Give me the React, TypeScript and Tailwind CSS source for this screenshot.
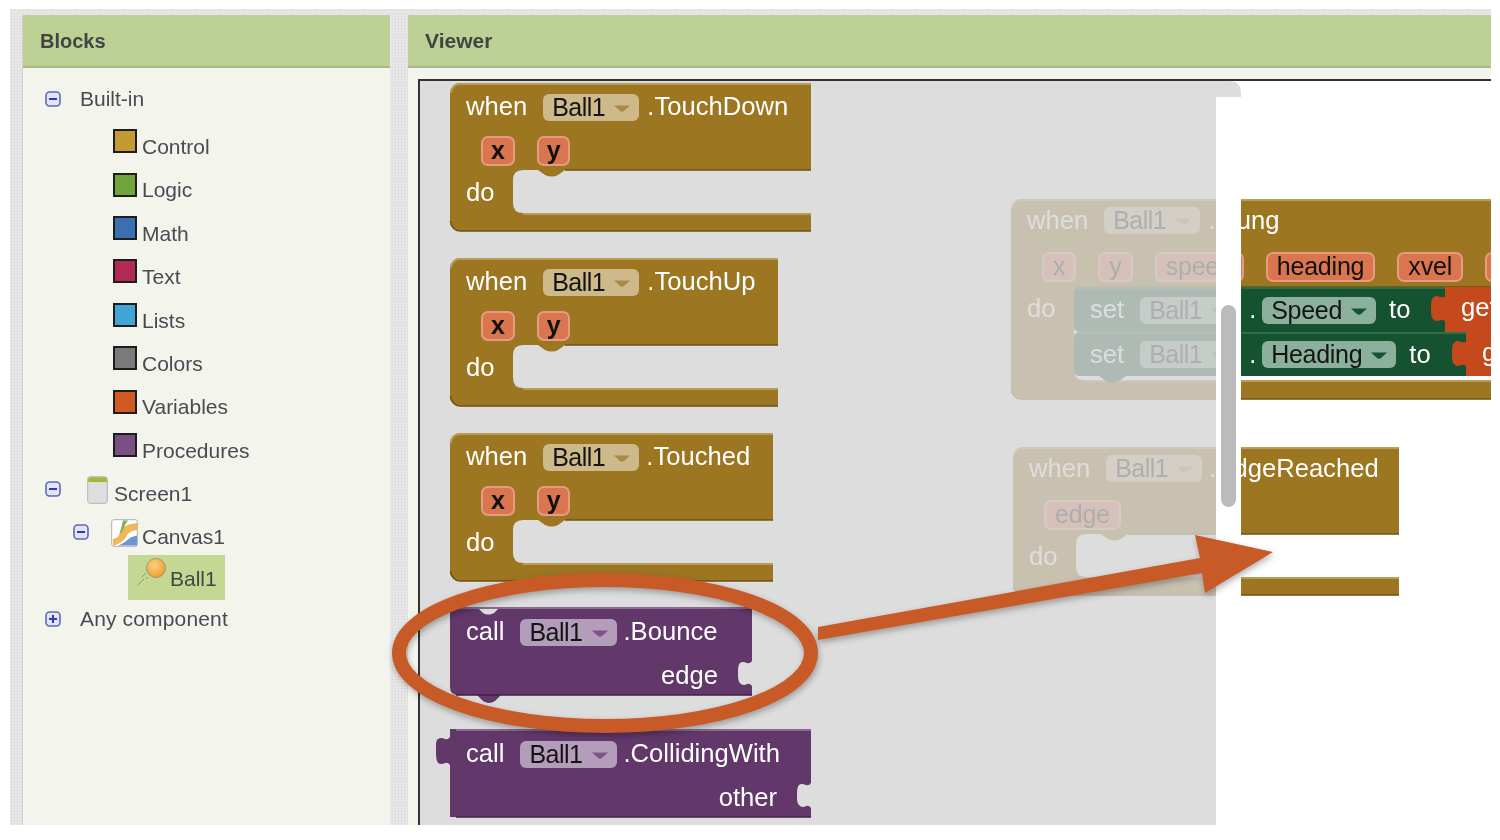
import type { ReactNode } from 'react';

const BROWN = '#9c7621';
const PURPLE = '#62386b';

const categories = [
  { name: 'Control', color: 'bg-[#c49a35]' },
  { name: 'Logic', color: 'bg-[#6fa53a]' },
  { name: 'Math', color: 'bg-[#3a6fb0]' },
  { name: 'Text', color: 'bg-[#b02a55]' },
  { name: 'Lists', color: 'bg-[#3fa6d6]' },
  { name: 'Colors', color: 'bg-[#7a7a7a]' },
  { name: 'Variables', color: 'bg-[#d05a22]' },
  { name: 'Procedures', color: 'bg-[#7a4f85]' },
];

const Toggle = ({ plus = false }: { plus?: boolean }) => (
  <svg width="16" height="16" viewBox="0 0 16 16" className="shrink-0">
    <rect x="1" y="1" width="14" height="14" rx="3.5" fill="#e2e5f4" stroke="#5f68b8" strokeWidth="1.6" />
    <path d={plus ? 'M4 8h8M8 4v8' : 'M4 8h8'} stroke="#2f36c8" strokeWidth="2" />
  </svg>
);

const ScreenIcon = () => (
  <svg width="21" height="28" viewBox="0 0 21 28" className="shrink-0">
    <rect x="0.7" y="0.7" width="19.6" height="26.6" rx="2.5" fill="#dedede" stroke="#b5b5b5" />
    <path d="M1.2 6V3.2a2 2 0 0 1 2-2h14.6a2 2 0 0 1 2 2V6z" fill="#9dbd3a" />
  </svg>
);

const CanvasIcon = () => (
  <svg width="27" height="28" viewBox="0 0 27 28" className="shrink-0">
    <rect x="0.7" y="0.7" width="25.6" height="26.6" rx="2" fill="#fff" stroke="#b0b0b0" />
    <path d="M2 27V20C7 19 9 16 11 11 13 7 17 5 26 4V11C20 12 17 14 15 18 13 22 8 25 2 27z" fill="#f2b65a" />
    <path d="M8 16C10 11 11 5 12 1.500H17C14 5 13 9 11 13z" fill="#7fb24a" />
    <path d="M7 26.500C12 25 16 21 19 19 21 17.500 24 17 26 16.500V26.500z" fill="#6e95cf" />
  </svg>
);

const BallIcon = () => (
  <svg width="30" height="30" viewBox="0 0 30 30" className="shrink-0">
    <defs>
      <radialGradient id="ball" cx="0.4" cy="0.35" r="0.7">
        <stop offset="0" stopColor="#fbd27c" />
        <stop offset="1" stopColor="#ee9a2c" />
      </radialGradient>
    </defs>
    <circle cx="19" cy="10" r="9.500" fill="url(#ball)" stroke="#8f8f7a" strokeWidth="0.8" />
    <path d="M5 19l4-4M1 27l6-6M9 21l2-2" stroke="#8e9480" strokeWidth="1" />
  </svg>
);

const TreeRow = ({ pl, className = 'h-[43.4px]', children }: { pl: string; className?: string; children: ReactNode }) => (
  <div className={`flex items-center ${pl} ${className}`}>{children}</div>
);

const Sidebar = () => (
  <aside className="flex w-[368px] shrink-0 flex-col border-l border-[#cfcfcf] bg-[#f3f4ec]">
    <div className="flex h-[53px] shrink-0 items-center border-b-2 border-[#a7b78f] bg-[#bcd193] pl-[17px] text-[20px] font-bold text-[#444]">
      Blocks
    </div>
    <div className="flex flex-col pt-[11px] text-[21px] text-[#4a4a52]">
      <TreeRow pl="pl-[22px]" className="mb-[6px] h-[40px]">
        <Toggle />
        <span className="ml-[19px]">Built-in</span>
      </TreeRow>
      {categories.map((c) => (
        <TreeRow key={c.name} pl="pl-[90px]">
          <span className={`mb-[11px] size-[24px] shrink-0 border-2 border-[#1d1d1d] ${c.color}`} />
          <span className="ml-[5px]">{c.name}</span>
        </TreeRow>
      ))}
      <TreeRow pl="pl-[22px]" className="h-[43px]">
        <span className="mb-[10px] flex"><Toggle /></span>
        <span className="mb-[8px] ml-[26px] flex"><ScreenIcon /></span>
        <span className="ml-[6px]">Screen1</span>
      </TreeRow>
      <TreeRow pl="pl-[50px]" className="h-[43px]">
        <span className="mb-[10px] flex"><Toggle /></span>
        <span className="mb-[8px] ml-[22px] flex"><CanvasIcon /></span>
        <span className="ml-[4px]">Canvas1</span>
      </TreeRow>
      <div className="-mt-[3.500px] ml-[105px] flex h-[45px] w-[97px] items-center bg-[#c5d893] pl-[9px] text-[#454545]">
        <span className="mb-[9px] flex"><BallIcon /></span>
        <span className="ml-[3px] mt-[3px]">Ball1</span>
      </div>
      <TreeRow pl="pl-[22px]" className="h-[38px]">
        <Toggle plus />
        <span className="ml-[19px] tracking-[0.15px]">Any component</span>
      </TreeRow>
    </div>
  </aside>
);

const BlockText = ({ children, className = '' }: { children: ReactNode; className?: string }) => (
  <span className={`whitespace-nowrap text-[25.6px] leading-none text-white ${className}`}>{children}</span>
);

const Pill = ({ label, bg, arrow, className = '' }: { label: string; bg: string; arrow: string; className?: string }) => (
  <span className={`flex h-[27px] shrink-0 items-center gap-[8px] rounded-[6px] pl-[9px] pr-[8px] text-[25px] leading-none text-[#141414] ${bg} ${className}`}>
    {label}
    <svg width="18" height="8" viewBox="0 0 18 8" className="mt-[3px]">
      <path d="M1 0.500h16L11 6q-2 1.500-4 0z" fill={arrow} />
    </svg>
  </span>
);

const BrownPill = () => <Pill label="Ball1" bg="bg-[#cdb98a]" arrow="#a98a44" className="tracking-[-0.5px]" />;
const PurplePill = () => <Pill label="Ball1" bg="bg-[#b49cbb]" arrow="#7b5585" className="tracking-[-0.5px]" />;

const Chip = ({ label, bold = false }: { label: string; bold?: boolean }) => (
  <span className={`flex h-[30px] shrink-0 items-center rounded-[7px] border-2 border-[#e59c80] bg-[#d9754f] text-[25px] leading-none tracking-[-0.2px] text-[#111] ${bold ? 'px-[8px] font-bold' : 'px-[9px]'}`}>
    {label}
  </span>
);

type EventProps = {
  x: number;
  y: number;
  w: number;
  h?: number;
  notchTop?: number;
  notchBottom?: number;
  children: ReactNode;
};

const eventPath = (w: number, h: number, t: number, b: number) =>
  `M0 10A10 10 0 0 1 10 0H${w}V${t}H115L108 ${t + 5}Q102 ${t + 8} 95 ${t + 5}L88 ${t}H73Q63 ${t} 63 ${t + 10}V${b - 10}Q63 ${b} 73 ${b}H${w}V${h}H10A10 10 0 0 1 0 ${h - 10}Z`;

// hat block with a statement hole; x, y are canvas coordinates of the picture
const EventBlock = ({ x, y, w, h = 148, notchTop = 87, notchBottom = 130, children }: EventProps) => (
  <div className="absolute" style={{ left: x - 420, top: y - 81, width: w, height: h }}>
    <svg width={w} height={h + 2} className="absolute left-0 top-0 overflow-visible">
      <path d={eventPath(w, h, notchTop, notchBottom)} fill={BROWN} />
      <path d={`M1 10A9 9 0 0 1 10 1H${w}`} fill="none" stroke="#b99c55" strokeWidth="2" />
      <path d={`M73 ${notchBottom + 1}H${w}`} fill="none" stroke="#b99c55" strokeWidth="2" />
      <path d={`M0.500 ${h - 10}A10 10 0 0 0 10 ${h}H${w}M${w} ${notchTop}H115`} fill="none" stroke="#6d5215" strokeWidth="1.500" />
    </svg>
    <div className="relative flex flex-col">{children}</div>
  </div>
);

const HatRow = ({ children }: { children: ReactNode }) => (
  <div className="flex h-[48px] items-center pl-[16px]">{children}</div>
);

const Params = ({ names, bold = false }: { names: string[]; bold?: boolean }) => (
  <div className="flex h-[39px] items-center gap-[22px] pl-[31px]">
    {names.map((n) => <Chip key={n} label={n} bold={bold} />)}
  </div>
);

const TouchBlock = ({ y, w, name, gap }: { y: number; w: number; name: string; gap: string }) => (
  <EventBlock x={450} y={y} w={w}>
    <HatRow>
      <BlockText className="mr-[16px]">when</BlockText>
      <BrownPill />
      <BlockText className={gap}>{name}</BlockText>
    </HatRow>
    <Params names={['x', 'y']} bold />
    <div className="flex h-[46px] items-center pl-[16px]"><BlockText>do</BlockText></div>
  </EventBlock>
);

const socket = (w: number, y: number) =>
  `V${y}Q${w - 2} ${y + 3} ${w - 5} ${y + 2}Q${w - 10} ${y} ${w - 12} ${y + 2}Q${w - 14} ${y + 4} ${w - 14} ${y + 10}V${y + 15}Q${w - 14} ${y + 21} ${w - 11} ${y + 23}Q${w - 8} ${y + 25} ${w - 5} ${y + 23}Q${w - 2} ${y + 22} ${w} ${y + 25}`;

const CallBlock = ({ x, y, w, h, path, method, arg }: { x: number; y: number; w: number; h: number; path: string; method: string; arg: string }) => (
  <div className="absolute" style={{ left: x - 420, top: y - 81, width: w, height: h }}>
    <svg width={w} height={h} className="absolute left-0 top-0 overflow-visible">
      <path d={path} fill={PURPLE} />
      <path d={`M6 1H${w}`} stroke="#8a6a92" strokeWidth="2" fill="none" />
      <path d={`M6 ${h}H${w}`} stroke="#3f2046" strokeWidth="1.500" fill="none" />
    </svg>
    <div className="relative flex flex-col">
      <div className="flex h-[50px] items-center pl-[16px]">
        <BlockText className="mr-[16px]">call</BlockText>
        <PurplePill />
        <BlockText className="ml-[7px]">{method}</BlockText>
      </div>
      <div className="flex h-[37px] items-center justify-end pr-[34px]"><BlockText>{arg}</BlockText></div>
    </div>
  </div>
);

const Plug = ({ fill }: { fill: string }) => (
  <svg width="15" height="28" viewBox="0 0 15 28" className="absolute -left-[14px] top-[8px]">
    <path d="M15 1Q12 3 9 2 5 0 3 2 0 4 0 10V16Q0 23 3 25 6 27 9 25 12 24 15 27z" fill={fill} />
  </svg>
);

const SetRow = ({ prop, green, last = false, children }: { prop: string; green: string; last?: boolean; children: string }) => (
  <div className="relative flex h-[44.500px]">
    <div className={`flex h-full items-center rounded-l-[5px] border-t-2 border-[#2f6d4a] bg-[#15522f] pl-[16px] ${green}`}>
      <BlockText className="mr-[16px]">set</BlockText>
      <Pill label="Ball1" bg="bg-[#8bb09c]" arrow="#3d7a58" className="tracking-[-0.5px]" />
      <BlockText className="ml-[13px] mr-[9px] w-[4px]">.</BlockText>
      <Pill label={prop} bg="bg-[#8bb09c]" arrow="#15522f" className="tracking-[-0.3px]" />
      <BlockText className="ml-[13px]">{children}</BlockText>
    </div>
    <div className="relative h-full w-[80px] bg-[#c4491c] pl-[16px] pt-[8px]">
      <Plug fill="#c4491c" />
      <BlockText>get</BlockText>
    </div>
    {last && (
      <svg width="27" height="7" viewBox="0 0 27 7" className="absolute left-[25px] top-full">
        <path d="M0 0H27L20 5Q14 8 7 5z" fill="#15522f" />
      </svg>
    )}
  </div>
);

const Workspace = () => (
  <>
    <EventBlock x={1011} y={199} w={560} h={200} notchTop={88} notchBottom={181}>
      <HatRow>
        <BlockText className="mr-[16px] -mt-[5px]">when</BlockText>
        <span className="-mt-[5px] flex"><BrownPill /></span>
        <BlockText className="ml-[8px] -mt-[5px]">.Flung</BlockText>
      </HatRow>
      <div className="-mt-[1px] flex h-[41px] items-center gap-[22px] pl-[31px]">
        {['x', 'y', 'speed', 'heading', 'xvel', 'yvel'].map((n) => <Chip key={n} label={n} />)}
      </div>
      <div className="flex">
        <div className="w-[63px] pl-[16px] pt-[9px]"><BlockText>do</BlockText></div>
        <div className="flex flex-col">
          <SetRow prop="Speed" green="w-[371px]">to</SetRow>
          <SetRow prop="Heading" green="w-[392px]" last>to</SetRow>
        </div>
      </div>
    </EventBlock>
    <EventBlock x={1013} y={447} w={386} notchTop={87} notchBottom={130}>
      <HatRow>
        <BlockText className="mr-[16px] -mt-[5px]">when</BlockText>
        <span className="-mt-[5px] flex"><BrownPill /></span>
        <BlockText className="ml-[7px] -mt-[5px]">.EdgeReached</BlockText>
      </HatRow>
      <Params names={['edge']} />
      <div className="flex h-[46px] items-center pl-[16px]"><BlockText>do</BlockText></div>
    </EventBlock>
  </>
);

const Flyout = () => (
  <div className="absolute bottom-0 left-0 top-0 w-[821px] rounded-tr-[10px] bg-[#d4d4d4]/80">
    <div className="absolute bottom-0 left-[796px] top-[16px] w-[25px] bg-white">
      <div className="absolute left-[5px] top-[208px] h-[202px] w-[15px] rounded-[8px] bg-[#bbbbbb]" />
    </div>
    <div className="absolute left-0 top-0">
      <TouchBlock y={83} w={361} name=".TouchDown" gap="ml-[8px]" />
      <TouchBlock y={258} w={328} name=".TouchUp" gap="ml-[8px]" />
      <TouchBlock y={433} w={323} name=".Touched" gap="ml-[7px]" />
      <CallBlock
        x={450}
        y={607}
        w={302}
        h={88}
        method=".Bounce"
        arg="edge"
        path={`M0 8Q0 0 8 0H27L33 6Q38 9 44 6L50 0H302${socket(302, 54)}V88H51L45 94Q39 98 33 94L27 88H8Q0 88 0 80Z`}
      />
      <CallBlock
        x={450}
        y={729}
        w={361}
        h={88}
        method=".CollidingWith"
        arg="other"
        path={`M0 0H361${socket(361, 54)}V88H0V36Q-2 33 -5 34 -9 36 -12 34 -14 31 -14 24V16Q-14 11 -12 10 -9 8 -5 10 -2 11 0 8Z`}
      />
    </div>
  </div>
);

const Annotation = () => (
  <svg width="1491" height="825" className="pointer-events-none absolute left-0 top-0 drop-shadow-[1px_3px_3px_rgba(0,0,0,0.3)]">
    <ellipse cx="605" cy="653" rx="206" ry="73" fill="none" stroke="#c85a27" strokeWidth="14" />
    <path d="M818 627L1200 558L1195 535L1273 552L1205 593L1202 573L818 640Z" fill="#c85a27" />
  </svg>
);

const Viewer = () => (
  <section className="flex min-w-0 flex-1 flex-col bg-[#f3f4ec]">
    <div className="flex h-[53px] shrink-0 items-center border-b-2 border-[#a7b78f] bg-[#bcd193] pl-[17px] text-[21px] font-bold text-[#444]">
      Viewer
    </div>
    <div className="flex-1 pl-[10px] pt-[11px]">
      <div className="relative h-full overflow-hidden border-l-2 border-t-2 border-[#333] bg-white">
        <Workspace />
        <Flyout />
      </div>
    </div>
  </section>
);

export default function App() {
  return (
    <div className="h-[840px] w-[1500px] bg-white font-['Liberation_Sans',sans-serif]">
      <div className="relative h-[825px] w-[1491px] overflow-hidden blur-[0.4px]">
        <div className="ml-[10px] mt-[9px] flex h-[816px] gap-[18px] bg-[#e6e6e6] bg-[radial-gradient(#d2d2d2_1px,transparent_1px)] bg-[length:3px_3px] pl-[12px] pt-[6px]">
          <Sidebar />
          <Viewer />
        </div>
        <Annotation />
      </div>
    </div>
  );
}
